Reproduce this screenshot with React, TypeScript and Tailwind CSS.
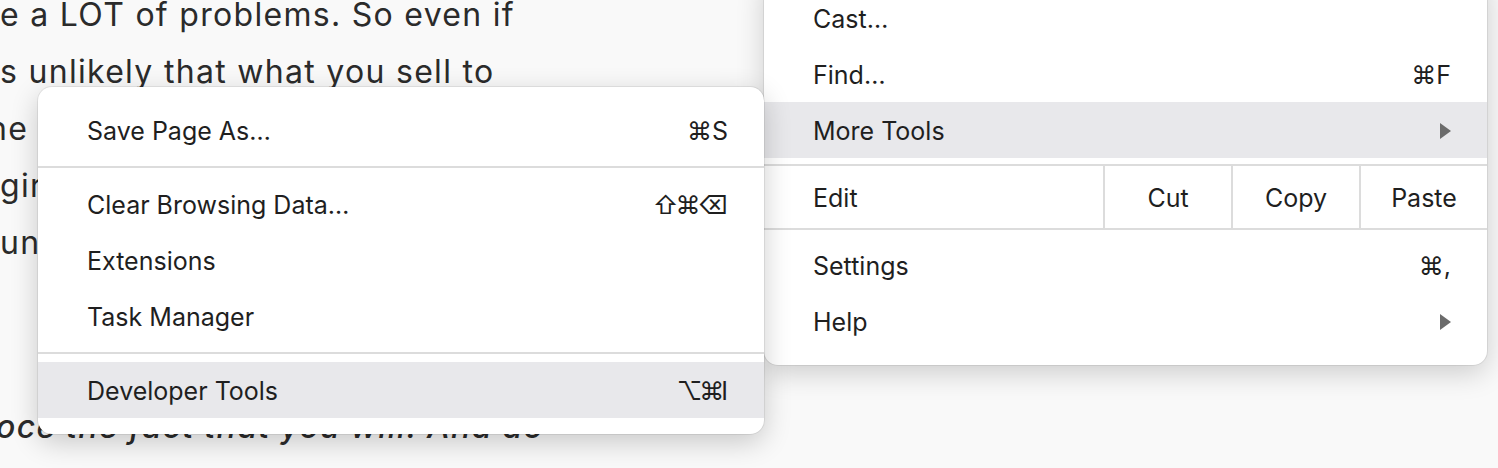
import React from "react";

const FONT = { fontFamily: 'Inter, "DejaVu Sans", sans-serif' };

function Arrow() {
  return (
    <svg width="11" height="16" viewBox="0 0 11 16" className="block">
      <polygon points="0,0 11,8 0,16" fill="#6b6b6b" />
    </svg>
  );
}

function Row({
  label,
  shortcut,
  arrow,
  active,
  tight,
}: {
  label: string;
  shortcut?: string;
  arrow?: boolean;
  active?: boolean;
  tight?: boolean;
}) {
  return (
    <div
      className={
        "flex h-[56px] items-center justify-between pl-[49px] pr-[36px] pt-[4px] " +
        (active ? "bg-[#e8e8eb]" : "")
      }
    >
      <span>{label}</span>
      {shortcut ? (
        <span className={tight ? "tracking-[-3px] pr-[3px]" : ""}>{shortcut}</span>
      ) : null}
      {arrow ? (
        <span className="-mt-[3px]">
          <Arrow />
        </span>
      ) : null}
    </div>
  );
}

function Sep({ className = "" }: { className?: string }) {
  return <div className={"h-[2px] bg-[#dcdcdc] " + className} />;
}

export default function App() {
  return (
    <div
      className="relative h-[468px] w-[1498px] overflow-hidden bg-[#f9f9f9]"
      style={FONT}
    >
      <div className="mt-[-14px] whitespace-nowrap text-[32px] leading-[57px] tracking-[1.3px] text-[#2b2b2b]">
        <div>e a LOT of problems. So even if</div>
        <div>s unlikely that what you sell to</div>
        <div className="ml-[-12px]">he same people will be</div>
        <div>girl</div>
        <div>unlikely</div>
        <div>&nbsp;</div>
        <div>&nbsp;</div>
        <div className="mt-[13px] ml-[-4px] italic font-medium">
          oce the fact that you will. And do
        </div>
      </div>

      <div className="absolute left-[764px] top-[-26px] w-[723px] rounded-[14px] bg-white pb-[16px] pt-[16px] text-[25px] text-[#1f1f1f] shadow-[0_0_0_1px_rgba(0,0,0,0.07),0_8px_28px_rgba(0,0,0,0.18)]">
        <Row label="Cast…" />
        <Row label="Find…" shortcut="⌘F" />
        <Row label="More Tools" arrow active />
        <Sep className="mt-[6px]" />
        <div className="flex h-[62px] items-stretch">
          <div className="flex flex-1 items-center pl-[49px] pt-[4px]">Edit</div>
          <div className="flex w-[128px] items-center justify-center border-l-2 border-[#dcdcdc] pt-[4px]">
            Cut
          </div>
          <div className="flex w-[128px] items-center justify-center border-l-2 border-[#dcdcdc] pt-[4px]">
            Copy
          </div>
          <div className="flex w-[128px] items-center justify-center border-l-2 border-[#dcdcdc] pt-[4px]">
            Paste
          </div>
        </div>
        <Sep className="mb-[7px]" />
        <Row label="Settings" shortcut="⌘," />
        <Row label="Help" arrow />
      </div>

      <div className="absolute left-[38px] top-[87px] w-[726px] rounded-[14px] bg-white pb-[16px] pt-[15px] text-[25px] text-[#1f1f1f] shadow-[0_0_0_1px_rgba(0,0,0,0.07),0_8px_28px_rgba(0,0,0,0.2)]">
        <Row label="Save Page As…" shortcut="⌘S" />
        <Sep className="my-[8px]" />
        <Row label="Clear Browsing Data…" shortcut="⇧⌘⌫" tight />
        <Row label="Extensions" />
        <Row label="Task Manager" />
        <Sep className="my-[8px]" />
        <Row label="Developer Tools" shortcut="⌥⌘I" active tight />
      </div>
    </div>
  );
}
